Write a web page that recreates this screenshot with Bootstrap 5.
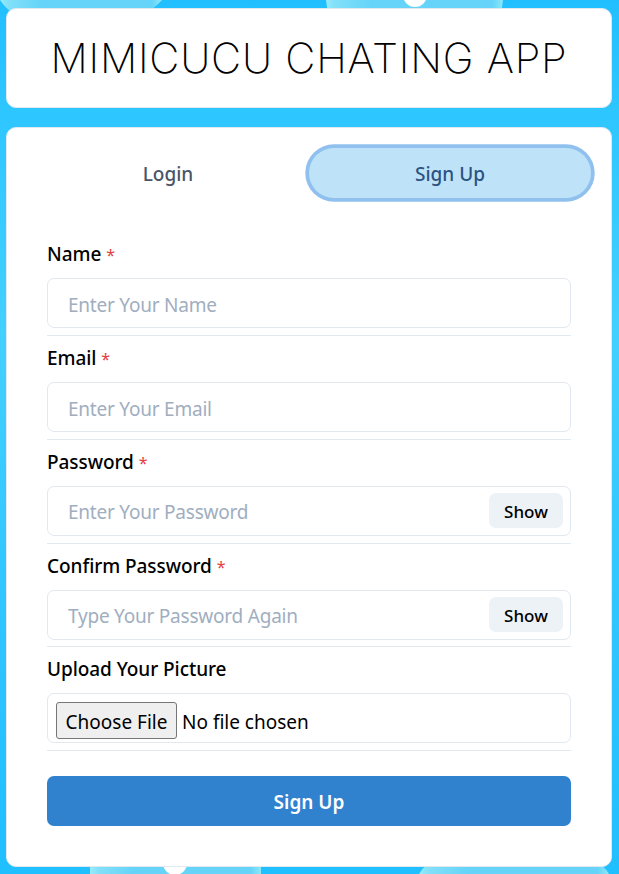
<!DOCTYPE html>
<html lang="en">
<head>
<meta charset="utf-8">
<meta name="viewport" content="width=device-width, initial-scale=1">
<title>Mimicucu Chating App</title>
<link href="https://cdn.jsdelivr.net/npm/bootstrap@5.3.0/dist/css/bootstrap.min.css" rel="stylesheet">
<style>
html, body { height: 874px; overflow: hidden; }
body { font: 400 19px/30px "Noto Sans", "Open Sans", sans-serif; color: #000; background: linear-gradient(#22bfff, #2ec6ff 110px, #42d0ff 330px, #2fc5ff 620px, #20bfff 874px); position: relative; }
.backdrop { position: absolute; inset: 0; width: 619px; height: 874px; z-index: -1; }
.page { width: 606px; margin-left: 6px; padding-top: 8px; }
.panel { background: #fff; border: 1px solid #e2e8f0; border-radius: 10px; }
.title-panel { height: 100px; margin-bottom: 19px; }
.title-panel h1 { font: 200 41.5px/60px Inter, sans-serif; letter-spacing: .77px; color: #000; white-space: nowrap; }
.form-panel { height: 740px; padding: 20px; }
.tab-pill { height: 50px; border: 0; border-radius: 50px; background: none; font-weight: 500; color: #4a5568; padding: 2px 0 0; }
.tab-pill.active { background: #bee3f8; color: #2c5282; box-shadow: 0 0 0 3.75px #90c1ee; }
form { padding: 41px 20px 0; }
.form-row { height: 103.75px; border-bottom: 1px solid #e2e8f0; margin: 0; }
.form-row label { display: block; font-weight: 500; height: 30px; margin-bottom: 9px; white-space: nowrap; letter-spacing: -.06px; }
.form-row + .form-row { padding-top: 7px; }
.form-row:first-child { height: 97px; }
.star { color: #e53e3e; font-weight: 400; font-size: 16px; line-height: 20px; }
.field { height: 50px; border: 1px solid #e2e8f0; border-radius: 7px; padding-left: 20px; padding-right: 7px; }
.field input { border: 0; outline: 0; padding: 3px 0 0; background: none; min-width: 0; height: 46px; letter-spacing: -.22px; }
.field input::placeholder { color: #a0aec0; opacity: 1; }
.show-btn { width: 74px; height: 35px; border: 0; border-radius: 7px; background: #edf2f7; font-size: 17px; font-weight: 500; padding: 2px 0 0; line-height: 33px; color: #000; }
.file-field { padding: 8px 8px 0; }
.choose { width: 121px; height: 37px; border: 1px solid #767676; border-radius: 3px; background: #efefef; padding: 3px 0 0; line-height: 30px; color: #000; white-space: nowrap; }
.file-note { margin-left: 5px; padding-top: 5px; white-space: nowrap; }
.submit { height: 50px; margin-top: 25px; border: 0; border-radius: 7px; background: #3182ce; color: #fff; font-weight: 600; padding: 2px 0 0; }
</style>
</head>
<body>
<svg class="backdrop" viewBox="0 0 619 874" aria-hidden="true">
<defs>
<linearGradient id="glass"><stop offset="0" stop-color="#98ecf9"/><stop offset=".05" stop-color="#82e0f9"/><stop offset=".25" stop-color="#66d4f8"/><stop offset=".94" stop-color="#66d4f8"/><stop offset="1" stop-color="#8ce8f8"/></linearGradient>
</defs>
<g fill="url(#glass)">
<path d="M0 0H162Q155 8 144 14H14Q6 9 0 0Z"/>
<path d="M326 0H503L501 14H328Z"/>
<path d="M90 862H261V874H90Z"/>
<path d="M419 874Q426 862 440 858H590Q604 865 609 874Z"/>
</g>
<g fill="#fff"><circle cx="415" cy="-5" r="12"/><circle cx="175" cy="863" r="12"/></g>
</svg>
<main class="page">
<header class="panel title-panel d-flex align-items-center justify-content-center"><h1 class="m-0">MIMICUCU CHATING APP</h1></header>
<section class="panel form-panel">
<div class="d-flex" role="tablist">
<button class="tab-pill flex-fill w-50" role="tab" type="button">Login</button>
<button class="tab-pill active flex-fill w-50" role="tab" type="button">Sign Up</button>
</div>
<form>
<div class="form-row"><label for="name">Name <span class="star">*</span></label>
<div class="field d-flex align-items-center"><input class="flex-fill" id="name" placeholder="Enter Your Name"></div></div>
<div class="form-row"><label for="email">Email <span class="star">*</span></label>
<div class="field d-flex align-items-center"><input class="flex-fill" id="email" placeholder="Enter Your Email"></div></div>
<div class="form-row"><label for="password">Password <span class="star">*</span></label>
<div class="field d-flex align-items-center"><input class="flex-fill" id="password" type="password" placeholder="Enter Your Password"><button class="show-btn" type="button">Show</button></div></div>
<div class="form-row"><label for="confirm">Confirm Password <span class="star">*</span></label>
<div class="field d-flex align-items-center"><input class="flex-fill" id="confirm" type="password" placeholder="Type Your Password Again"><button class="show-btn" type="button">Show</button></div></div>
<div class="form-row"><label>Upload Your Picture</label>
<div class="field file-field d-flex align-items-start"><button class="choose" type="button">Choose File</button><span class="file-note">No file chosen</span></div></div>
<button class="submit w-100" type="button">Sign Up</button>
</form>
</section>
</main>
</body>
</html>
